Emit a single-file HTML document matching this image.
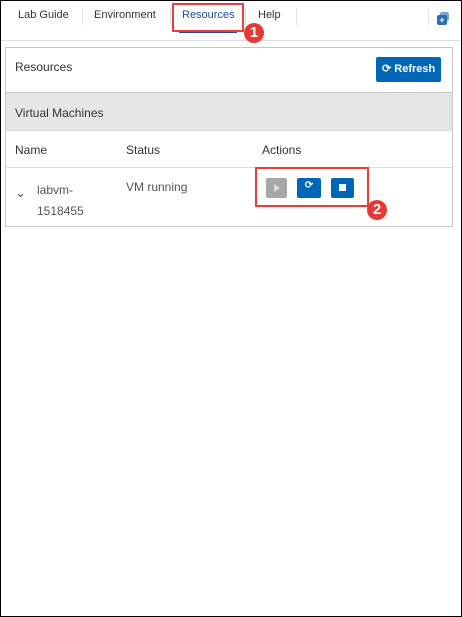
<!DOCTYPE html><html><head><style>
*{margin:0;padding:0;box-sizing:border-box}
body{width:462px;height:617px;position:relative;background:#fff;font-family:"Liberation Sans",sans-serif;color:#333;overflow:hidden}
.frame{position:absolute;left:0;top:0;width:462px;height:617px;border:1px solid #000}
.a{position:absolute}
.t{font-size:11px;color:#333}
.sep{position:absolute;top:8px;width:1px;height:17px;background:#e2e2e2}
.badge{position:absolute;width:20px;height:20px;border-radius:50%;background:#e53935;color:#fff;font-size:15px;line-height:20px;text-align:center;font-weight:bold}
.rb{position:absolute;border:2px solid #ee3b3b}
.btn{position:absolute;top:178px;height:20px;border-radius:2px;background:#0067b8}
</style></head><body>
<div class="frame"></div>
<div class="a t" style="left:18px;top:9px">Lab Guide</div>
<div class="sep" style="left:82px"></div>
<div class="a t" style="left:94px;top:9px">Environment</div>
<div class="sep" style="left:170px"></div>
<div class="a t" style="left:182px;top:9px;color:#1e4c8f">Resources</div>
<div class="sep" style="left:245px"></div>
<div class="a t" style="left:258px;top:9px">Help</div>
<div class="sep" style="left:296px"></div>
<div class="sep" style="left:428px"></div>
<div class="a" style="left:440px;top:12px;width:9px;height:9px;background:#7aa7d8;border-radius:2px"></div>
<div class="a" style="left:437px;top:15px;width:10px;height:10px;background:#2b6cb8;border-radius:2px;color:#fff;font-size:9px;line-height:10px;text-align:center;font-weight:bold">+</div>
<div class="a" style="left:179px;top:32px;width:58px;height:1px;background:#1e4c8f"></div>
<div class="a" style="left:1px;top:40px;width:460px;height:1px;background:#ddd"></div>
<div class="rb" style="left:172px;top:3px;width:72px;height:29px"></div>
<div class="badge" style="left:244px;top:23px">1</div>

<div class="a" style="left:5px;top:47px;width:448px;height:180px;border:1px solid #c8c8c8"></div>
<div class="a" style="left:15px;top:60px;font-size:12px">Resources</div>
<div class="a" style="left:376px;top:57px;width:65px;height:25px;background:#0067b8;border-radius:2px;color:#fff;font-size:11px;font-weight:bold;line-height:25px;padding-left:6px">⟳ Refresh</div>
<div class="a" style="left:6px;top:92px;width:446px;height:1px;background:#c8c8c8"></div>
<div class="a" style="left:6px;top:93px;width:446px;height:37px;background:#e6e6e6"></div>
<div class="a" style="left:15px;top:106px;font-size:12px">Virtual Machines</div>
<div class="a" style="left:6px;top:130px;width:446px;height:1px;background:#ddd"></div>
<div class="a" style="left:15px;top:143px;font-size:12px">Name</div>
<div class="a" style="left:126px;top:143px;font-size:12px">Status</div>
<div class="a" style="left:262px;top:143px;font-size:12px">Actions</div>
<div class="a" style="left:6px;top:167px;width:446px;height:1px;background:#ddd"></div>
<div class="a" style="left:15px;top:185px;font-size:13px;color:#555">⌄</div>
<div class="a" style="left:37px;top:180px;font-size:12px;line-height:21px;color:#555">labvm-<br>1518455</div>
<div class="a" style="left:126px;top:180px;font-size:12px;color:#555">VM running</div>
<div class="btn" style="left:266px;width:21px;background:#a6a6a6"></div>
<div class="a" style="left:274px;top:184px;width:0;height:0;border-left:6px solid #ddd;border-top:4px solid transparent;border-bottom:4px solid transparent"></div>
<div class="btn" style="left:297px;width:24px"></div>
<div class="a" style="left:303px;top:180px;width:12px;color:#fff;font-size:10px;font-weight:bold;text-align:center">⟳</div>
<div class="btn" style="left:331px;width:23px"></div>
<div class="a" style="left:339px;top:184px;width:7px;height:7px;background:#fff"></div>
<div class="rb" style="left:255px;top:167px;width:114px;height:40px"></div>
<div class="badge" style="left:367px;top:200px">2</div>
</body></html>
